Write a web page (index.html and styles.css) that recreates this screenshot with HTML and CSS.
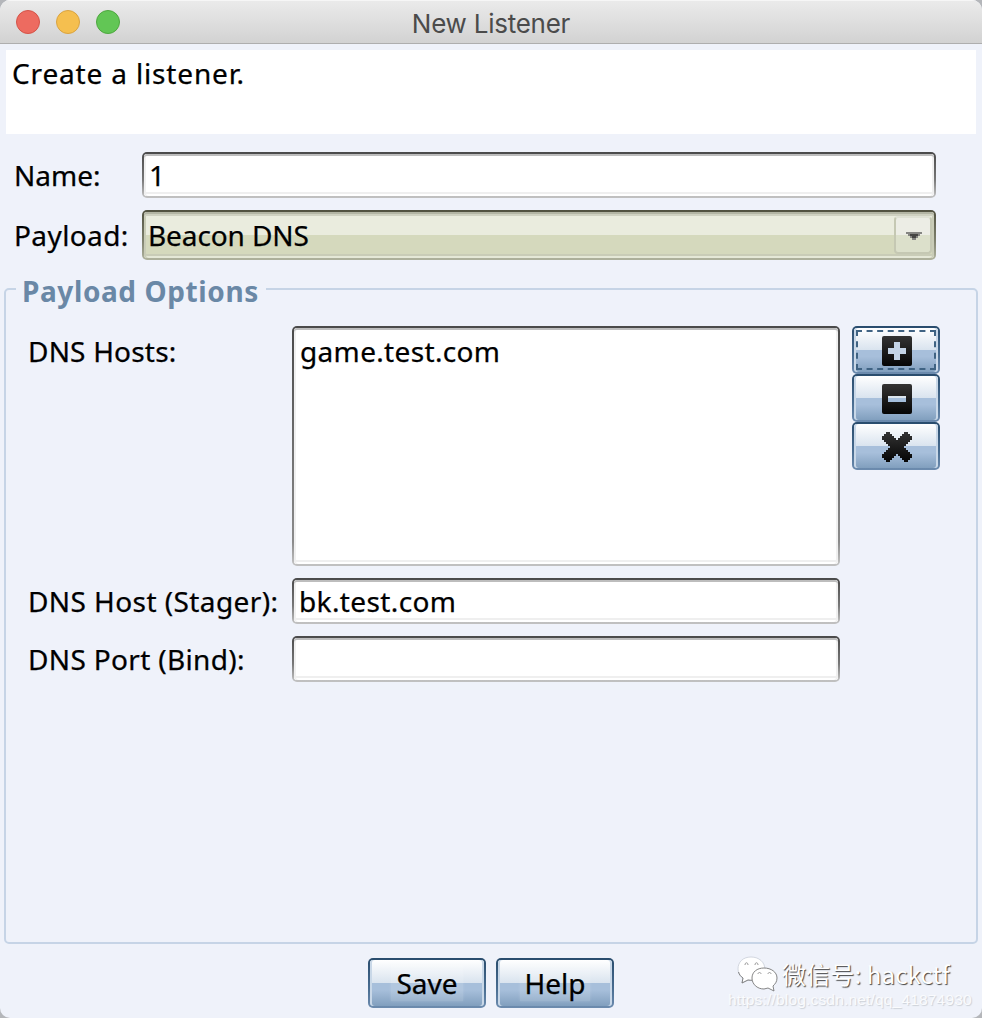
FILE: index.html
```html
<!DOCTYPE html>
<html lang="en">
<head>
<meta charset="utf-8">
<title>New Listener</title>
<link rel="stylesheet" href="styles.css">
</head>
<body>
<div class="window">
  <header class="titlebar">
    <div class="lights"><i class="light red"></i><i class="light amber"></i><i class="light green"></i></div>
    <span class="title">New Listener</span>
  </header>
  <div class="description"><span class="t-create">Create a listener.</span></div>
  <div class="form">
    <div class="row name-row"><label class="label t-name">Name:</label><div class="field"><span>1</span></div></div>
    <div class="row payload-row"><label class="label t-payload">Payload:</label>
      <div class="field combo"><span class="t-beacon">Beacon DNS</span>
        <div class="arrow"><svg width="16" height="8" viewBox="0 0 16 8"><path d="M0 0h16v2h-2v2h-2v2h-2v2H6V6H4V4H2V2H0z" fill="#858582"/><path d="M4 2h8v2h-2v2H6V4H4z" fill="#454543"/></svg></div>
      </div>
    </div>
  </div>
  <section class="options">
    <h2 class="legend"><span>Payload Options</span></h2>
    <div class="grid">
      <label class="label t-hosts">DNS Hosts:</label>
      <div class="field list"><span class="t-game">game.test.com</span></div>
      <div class="tools">
        <button class="btn tool focus"><svg width="30" height="30" viewBox="0 0 30 30"><defs><linearGradient id="ink" x1="0" y1="0" x2="0" y2="1"><stop offset="0" stop-color="#333"/><stop offset="1" stop-color="#050505"/></linearGradient></defs><rect width="30" height="30" rx="2" fill="url(#ink)"/><path d="M12 6h6v6h6v6h-6v6h-6v-6H6v-6h6z" fill="#c3d3e6"/></svg></button>
        <button class="btn tool"><svg width="30" height="30" viewBox="0 0 30 30"><rect width="30" height="30" rx="2" fill="url(#ink)"/><path d="M6 12h18v6H6z" fill="#a4bedc"/><path d="M6 12h18v2H6z" fill="#dbe5ee"/></svg></button>
        <button class="btn tool"><svg width="30" height="30" viewBox="0 0 30 30"><path d="M4 0h4v2h2v2h2v2h2v2h2V6h2V4h2V2h2V0h4v2h2v2h2v4h-2v2h-2v2h-2v2h-2v2h2v2h2v2h2v2h2v4h-2v2h-2v2h-4v-2h-2v-2h-2v-2h-2v-2h-2v2h-2v2h-2v2H8v2H4v-2H2v-2H0v-4h2v-2h2v-2h2v-2h2v-2H6v-2H4v-2H2V8H0V4h2V2h2z" fill="url(#ink)"/></svg></button>
      </div>
      <label class="label t-stager">DNS Host (Stager):</label>
      <div class="field"><span class="t-bk">bk.test.com</span></div><div></div>
      <label class="label t-port">DNS Port (Bind):</label>
      <div class="field"></div>
    </div>
  </section>
  <footer class="actions"><button class="btn action"><span class="t-save">Save</span></button><button class="btn action"><span class="t-help">Help</span></button></footer>
  <div class="watermark">
    <svg class="wechat" width="42" height="38" viewBox="0 0 42 38"><g fill="#fff"><path d="M14 1C6 1 1 6 1 13c0 4 2 7 5 9l-1 5 6-3c10 2 16-3 17-10C28 6 22 1 14 1z" stroke="#c3c8d2" stroke-width=".7"/><path d="M1.500 16c.7 2.500 2.200 4.500 4.500 6l-1 5 6-3c1.500.3 3 .4 4.500.2" stroke="#777" fill="none" stroke-width=".9"/><path d="M27 12c-7 0-12 4-12 10s5 11 12 11l4-1 6 3-1-5c2-2 4-4 4-8 0-6-6-10-13-10z" stroke="#777" stroke-width=".9"/></g><g fill="none" stroke="#999" stroke-width="1"><path d="M8 9c0-3 3-3 3 0M18 9c0-3 3-3 3 0M21 18c0-2 3-2 3 0M31 18c0-2 3-2 3 0"/></g></svg>
    <span class="account">微信号: hackctf</span>
    <span class="url">https://blog.csdn.net/qq_41874930</span>
  </div>
</div>
</body>
</html>
```
FILE: styles.css
```css
* { box-sizing: border-box; }
html, body { margin: 0; background: #b4b6ba; }
body { font-family: "Noto Sans", "Noto Sans CJK SC", sans-serif; font-size: 28px; color: #000; }
.window { position: relative; width: 982px; height: 1018px; overflow: hidden; background: #eff2fa; border-radius: 10px; display: flex; flex-direction: column; }
.titlebar { position: relative; height: 44px; flex: none; display: flex; align-items: center; justify-content: center; background: linear-gradient(#ebebeb, #d2d2d2); border-bottom: 1px solid #aeaeae; box-shadow: inset 0 1px #f6f6f6; }
.lights { position: absolute; left: 16px; top: 10px; display: flex; gap: 16px; }
.light { width: 24px; height: 24px; border-radius: 50%; border: 1px solid; }
.red { background: #ed6b60; border-color: #d45348; }
.amber { background: #f5bf4f; border-color: #d9a340; }
.green { background: #62c655; border-color: #4ea73f; }
.title { font: 26px/43px Inter, sans-serif; color: #4b4b4b; letter-spacing: -.25px; padding-top: 3px; }
.description { flex: none; height: 84px; margin: 6px 6px 0; padding: 5px 6px; background: #fff; line-height: 36px; }
.description span, .label, .field > span, .legend span, .action span { white-space: nowrap; -webkit-text-stroke: .25px; }
.form { flex: none; height: 126px; padding: 18px 46px 0 14px; display: flex; flex-direction: column; gap: 12px; }
.row { display: grid; grid-template-columns: 128px 1fr; }
.label { line-height: 36px; padding-top: 5px; }
.t-create { letter-spacing: .84px; }
.t-payload { letter-spacing: .4px; padding-top: 7px; }
.t-hosts { letter-spacing: .2px; padding-top: 7px; }
.t-stager { letter-spacing: .42px; }
.t-port { letter-spacing: .34px; }
.t-game { letter-spacing: .34px; }
.t-bk { letter-spacing: .38px; }
.t-beacon { letter-spacing: -.1px; }
.field { position: relative; height: 46px; padding: 3px 5px; line-height: 36px; border: 2px solid transparent; border-radius: 5px; background: linear-gradient(#fff, #fff) padding-box, linear-gradient(#4a4a4a, #777 60%, #c0c0c0 97%) border-box; box-shadow: inset 0 2px #bdbdbd, inset 2px 0 #f0f0f0, inset -2px 0 #f0f0f0, inset 0 -2px #fff, inset 0 -4px #efefef; }
.combo { height: 50px; padding: 5px 4px; background: linear-gradient(#eaecde 0 23px, #d5d9bd 23px) padding-box, linear-gradient(#515140, #7e806d 60%, #adb09b 97%) border-box; box-shadow: inset 0 2px #b3b5a4, inset 0 4px #cfd1c1, inset 2px 0 #c9ccb7, inset -2px 0 #c9ccb7, inset 0 -2px #e5e8d7, inset 0 -4px #c9ccb7; }
.arrow { position: absolute; right: 2px; top: 4px; width: 38px; height: 38px; border: 2px solid #c5c8b3; border-top-color: #dfe1d5; border-radius: 4px; background: linear-gradient(#ecede5 0 17px, #dce0cb 17px); }
.arrow svg { position: absolute; left: 10px; top: 14px; display: block; }
.options { position: relative; flex: none; height: 656px; margin: 28px 4px 0; border: 2px solid #c6d4e6; border-radius: 5px; background: #eff2fa; }
.legend { position: absolute; left: 10px; top: -17px; width: 250px; height: 36px; margin: 0; padding-left: 6px; font-size: 28px; line-height: 36px; font-weight: 700; letter-spacing: .6px; color: #6a88a6; background: #eff2fa; }
.legend span { -webkit-text-stroke: 0; }
.grid { display: grid; grid-template-columns: 264px 548px 88px; grid-template-rows: 240px 46px 46px; row-gap: 12px; padding: 36px 0 0 22px; }
.grid .tools { margin-left: 12px; }
.grid .list { height: 240px; padding: 5px 6px; background: linear-gradient(#fff, #fff) padding-box, linear-gradient(#4a4a4a, #8b8b8b 90%, #c0c0c0 99%) border-box; }
.tools { display: flex; flex-direction: column; width: 88px; }
.btn { display: flex; align-items: center; justify-content: center; font: inherit; line-height: 36px; color: #000; padding: 0; border: 2px solid transparent; border-radius: 5px; background: linear-gradient(#fff, #dae4ef 49%, #a7bfdb 50%, #a7bfdb 65%, #819fbe) padding-box, linear-gradient(#294c6d, #486c90 60%, #6d8caf) border-box; box-shadow: inset 2px 0 #c9d8e8, inset -2px 0 #c9d8e8; }
.tool { height: 48px; width: 88px; padding-top: 2px; }
.tool svg { display: block; margin-left: 2px; }
.focus { position: relative; }
.focus::after { content: ""; position: absolute; inset: 2px; border: 2px dashed #3f6383; }
.actions { flex: none; display: flex; justify-content: center; gap: 10px; padding-top: 14px; }
.action { width: 118px; height: 50px; }
.action span { padding: 0 5px; background: rgba(255,255,255,.13); box-shadow: 0 0 3px rgba(255,255,255,.15); }
.watermark { position: absolute; left: 728px; top: 955px; width: 250px; height: 60px; }
.wechat { position: absolute; left: 9px; top: 1px; }
.account { position: absolute; left: 54px; top: 2px; font: 24px/34px "Noto Sans CJK SC", sans-serif; letter-spacing: .15px; white-space: nowrap; color: #fff; text-shadow: 1px 1px 1px #444; }
.url { position: absolute; left: 0; top: 35px; font: 15.5px/20px "Liberation Sans", Arial, sans-serif; letter-spacing: .18px; white-space: nowrap; color: #fafbfd; text-shadow: 1px 1px 1px #ccd0d7; }
```
